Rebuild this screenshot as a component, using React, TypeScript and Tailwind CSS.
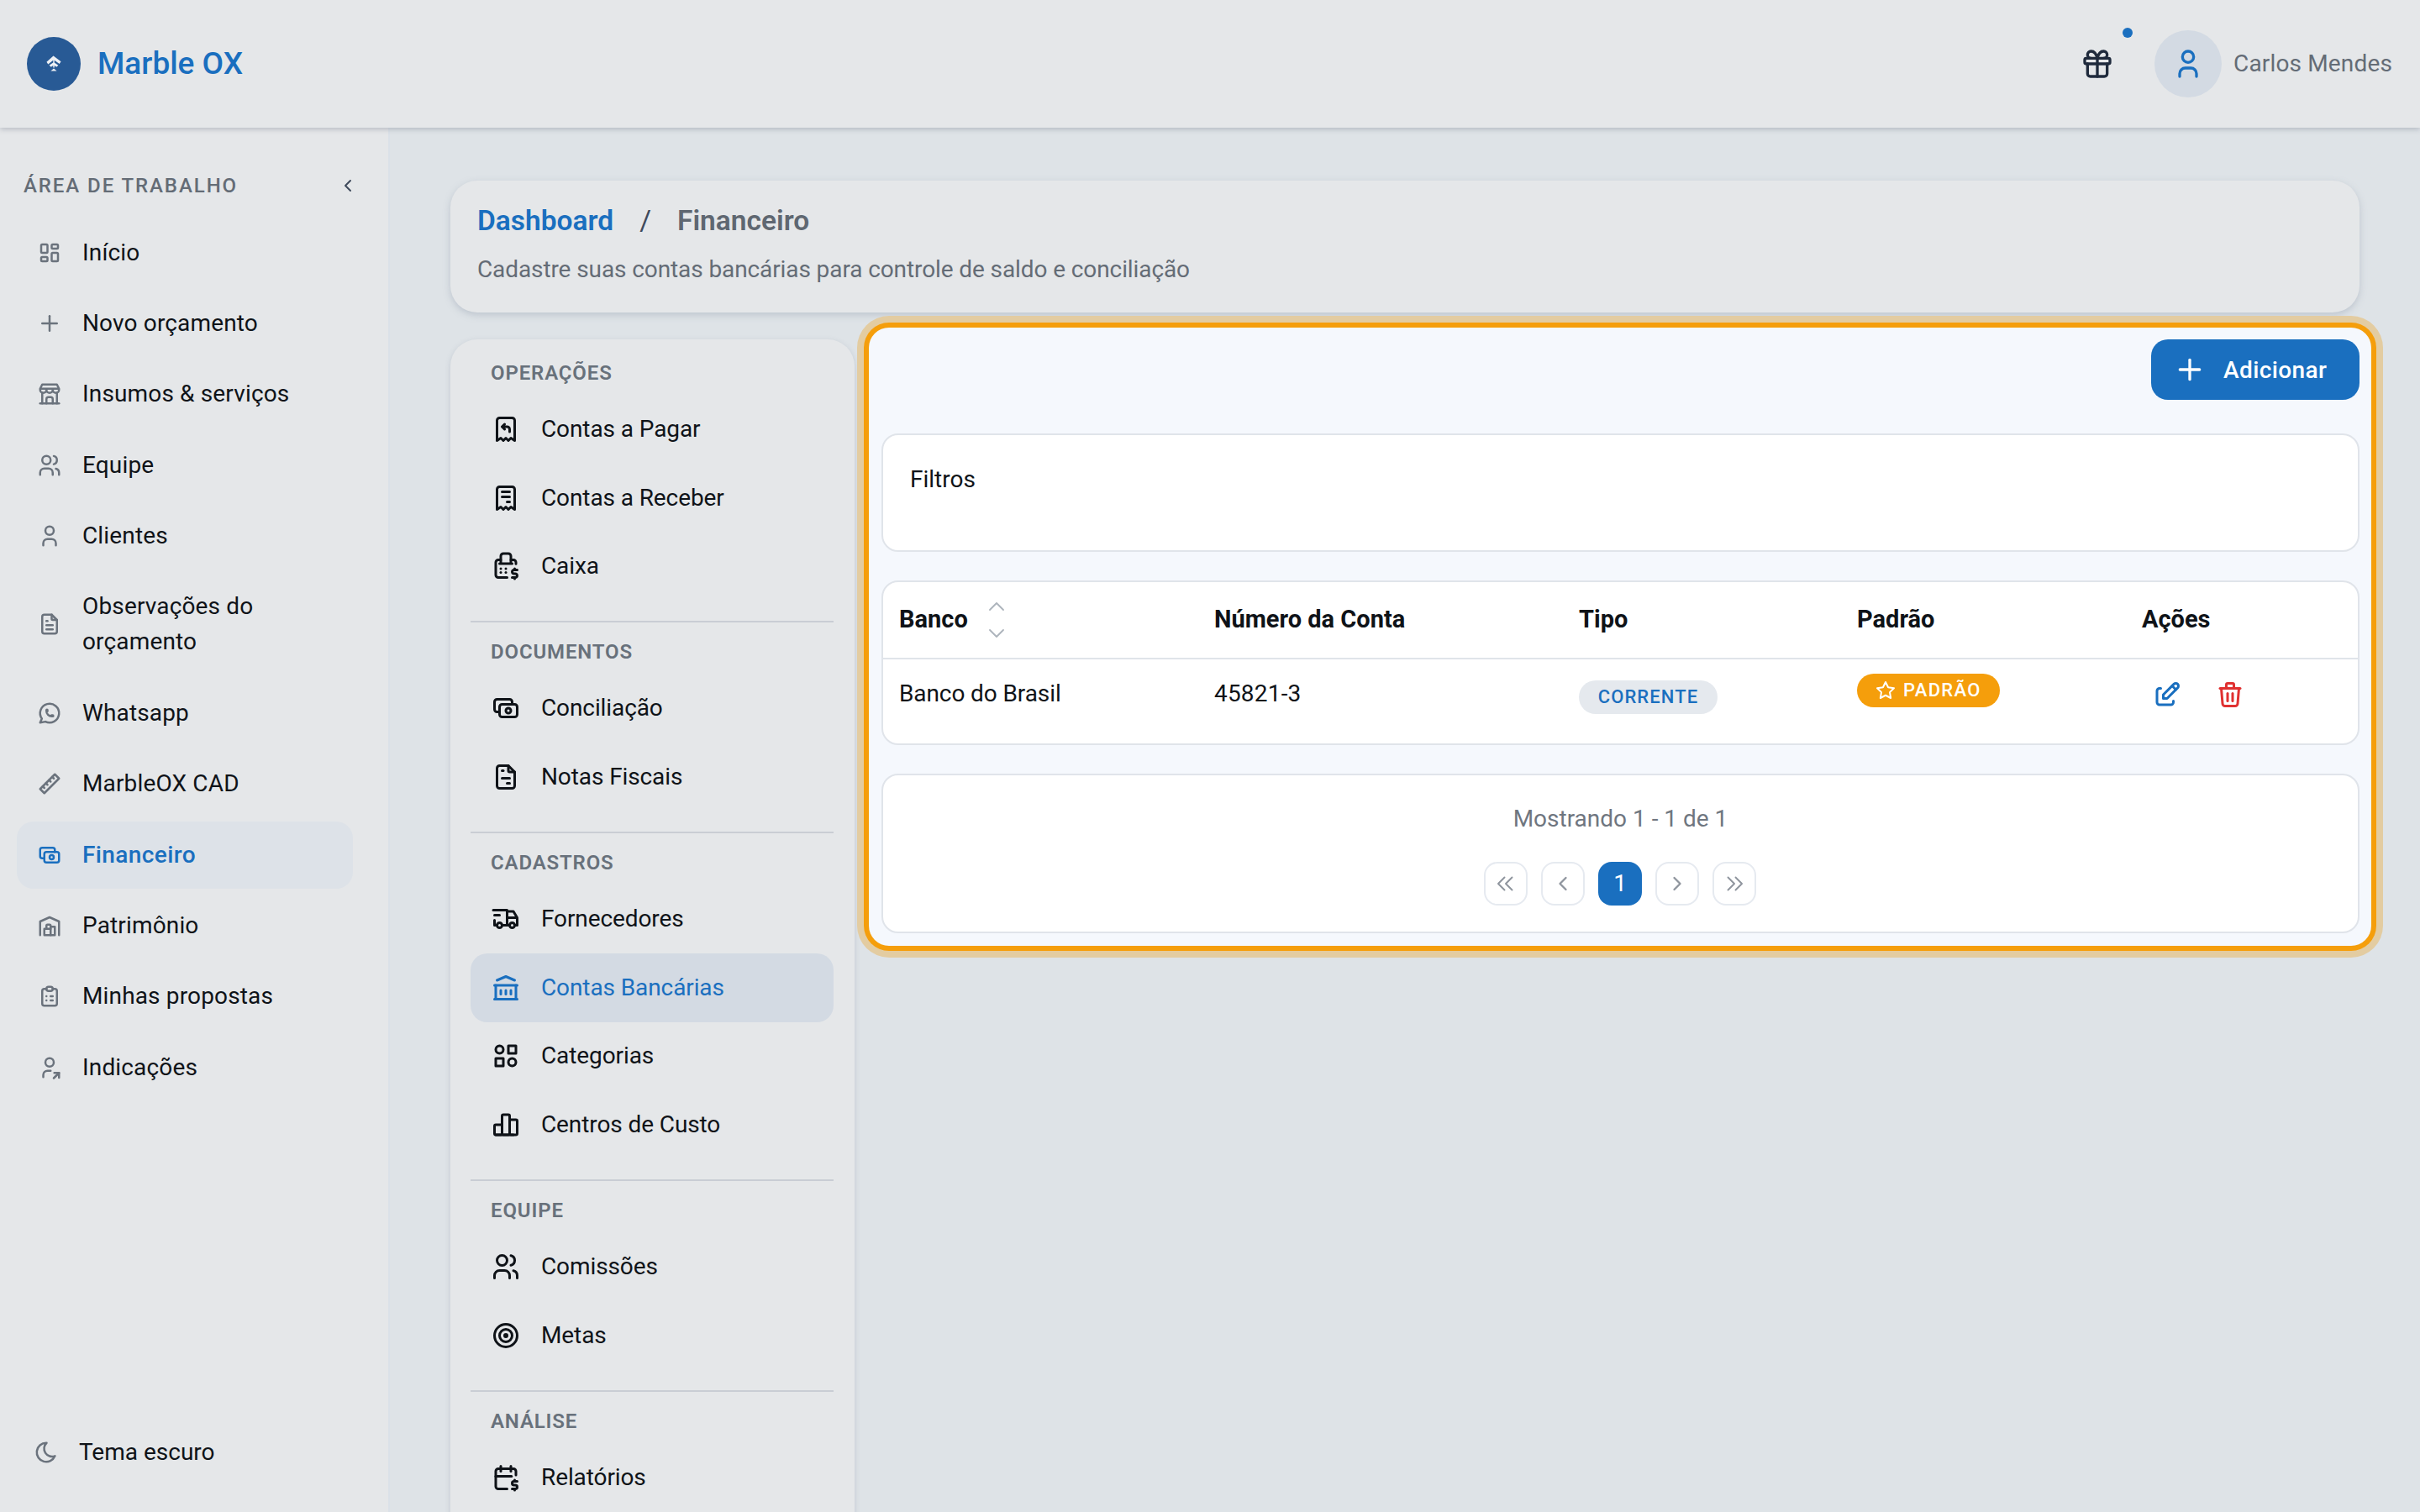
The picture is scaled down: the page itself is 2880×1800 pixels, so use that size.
import React from "react";
import {
  TbLayoutDashboard, TbPlus, TbBuildingStore, TbUsers, TbUser, TbFileText, TbBrandWhatsapp, TbRuler2, TbCash,
  TbBuildingWarehouse, TbClipboardList, TbUserShare, TbMoon, TbGift, TbEdit, TbTrash, TbStar, TbChevronUp, TbChevronDown,
  TbChevronLeft, TbChevronRight, TbChevronsLeft, TbChevronsRight, TbReceiptRefund, TbReceipt, TbCashRegister, TbFileInvoice,
  TbTruckDelivery, TbBuildingBank, TbCategory2, TbChartBar, TbTarget, TbCalendarDollar,
} from "react-icons/tb";

const BLUE = "text-[#1a6fbf]";

const mainNav: [React.ComponentType<any>, string][] = [
  [TbLayoutDashboard, "Início"],
  [TbPlus, "Novo orçamento"],
  [TbBuildingStore, "Insumos & serviços"],
  [TbUsers, "Equipe"],
  [TbUser, "Clientes"],
  [TbFileText, "Observações do orçamento"],
  [TbBrandWhatsapp, "Whatsapp"],
  [TbRuler2, "MarbleOX CAD"],
  [TbCash, "Financeiro"],
  [TbBuildingWarehouse, "Patrimônio"],
  [TbClipboardList, "Minhas propostas"],
  [TbUserShare, "Indicações"],
];

const groups: { label: string; items: [React.ComponentType<any>, string][] }[] = [
  { label: "OPERAÇÕES", items: [[TbReceiptRefund, "Contas a Pagar"], [TbReceipt, "Contas a Receber"], [TbCashRegister, "Caixa"]] },
  { label: "DOCUMENTOS", items: [[TbCash, "Conciliação"], [TbFileInvoice, "Notas Fiscais"]] },
  { label: "CADASTROS", items: [[TbTruckDelivery, "Fornecedores"], [TbBuildingBank, "Contas Bancárias"], [TbCategory2, "Categorias"], [TbChartBar, "Centros de Custo"]] },
  { label: "EQUIPE", items: [[TbUsers, "Comissões"], [TbTarget, "Metas"]] },
  { label: "ANÁLISE", items: [[TbCalendarDollar, "Relatórios"]] },
];

function PagerButton({ children, active }: { children: React.ReactNode; active?: boolean }) {
  return (
    <div
      className={
        active
          ? "w-[52px] h-[52px] rounded-[16px] bg-[#1a6fbf] text-white flex items-center justify-center text-[28px]"
          : "w-[52px] h-[52px] rounded-[16px] border-2 border-[#e6eaf0] bg-white text-[#8f959e] flex items-center justify-center"
      }
    >
      {children}
    </div>
  );
}

export default function App() {
  return (
    <div className="h-[1800px] w-[2880px] overflow-hidden flex flex-col bg-[#dee3e7] text-[#0f1318] font-['Roboto',sans-serif]">
      <header className="relative z-20 h-[152px] shrink-0 bg-[#e5e7e9] shadow-[0_2px_6px_rgba(100,110,125,0.35)] flex items-center pl-[32px] pr-[33px]">
        <div className="w-[64px] h-[64px] rounded-full bg-[#285a95] flex items-center justify-center">
          <svg width="18" height="20" viewBox="0 0 20 22" fill="#eef1f5">
            <path d="M9.5 0.5 L19.5 8 L17.5 11 L10.8 6.2 L10.8 9.2 L16 13 L13.6 15.2 L10.8 13.2 L10.8 16 L9.2 16 L9.2 13.2 L6.4 15.2 L4 13 L9.2 9.2 L9.2 6.2 L2.5 11.5 L0.5 8.5 Z" />
            <path d="M10 17 L14 20.5 L6 20.5 Z" />
          </svg>
        </div>
        <span className={`ml-[20px] text-[37px] font-medium ${BLUE}`}>Marble OX</span>
        <div className="ml-auto flex items-center">
          <div className="relative w-[40px] h-[40px] text-[#1f2a3c]">
            <TbGift size={40} />
            <span className="absolute left-[50px] top-[-23px] w-[12px] h-[12px] rounded-full bg-[#1a6fbf]" />
          </div>
          <div className="ml-[48px] w-[80px] h-[80px] rounded-full bg-[#d3dae3] flex items-center justify-center">
            <TbUser size={40} className={BLUE} />
          </div>
          <span className="ml-[14px] text-[28px] tracking-[0.15px] text-[#646c76]">Carlos Mendes</span>
        </div>
      </header>

      <div className="flex flex-1 min-h-0">
        <aside className="w-[464px] shrink-0 bg-[#e5e7e9] border-r-2 border-[#dbe1e8] flex flex-col pl-[20px] pr-[42px]">
          <div className="h-[108.5px] shrink-0 flex items-center justify-between pl-[8px]">
            <span className="text-[24px] font-medium tracking-[0.08em] text-[#646c76] mt-[30px]">ÁREA DE TRABALHO</span>
            <TbChevronLeft size={24} className="text-[#3f4a5c] mt-[30px] mr-[-6px]" />
          </div>
          <nav className="flex flex-col gap-[4.4px]">
            {mainNav.map(([Icon, label]) => {
              const active = label === "Financeiro";
              return (
                <div
                  key={label}
                  className={`flex items-center pl-[24px] pr-[20px] py-[19px] rounded-[20px] text-[28px] leading-[42px] ${
                    active ? `bg-[#dde2e8] font-medium tracking-[0.4px] ${BLUE}` : "tracking-[0.15px]"
                  }`}
                >
                  <Icon size={30} className={`shrink-0 ${active ? BLUE : "text-[#6b737d]"}`} />
                  <span className="ml-[24px]">{label}</span>
                </div>
              );
            })}
          </nav>
          <div className="mt-auto mb-[50px] flex items-center pl-[20px] text-[28px] leading-[42px]">
            <TbMoon size={30} className="text-[#6b737d] shrink-0" />
            <span className="ml-[24px]">Tema escuro</span>
          </div>
        </aside>

        <main className="flex-1 min-w-0 pl-[72px] pr-[72px] pt-[63px]">
          <section className="h-[157px] rounded-[32px] bg-[#e5e7e9] shadow-[0_3px_8px_rgba(130,140,160,0.35)] pl-[32px] pt-[26px]">
            <div className="flex items-center h-[44px] text-[33.5px] font-semibold">
              <span className={BLUE}>Dashboard</span>
              <span className="ml-[31px] font-normal text-[#3f4a5c]">/</span>
              <span className="ml-[31px] text-[#5f6771]">Financeiro</span>
            </div>
            <p className="mt-[15px] text-[28px] leading-[42px] tracking-[-0.1px] text-[#646c76]">
              Cadastre suas contas bancárias para controle de saldo e conciliação
            </p>
          </section>

          <div className="flex items-start mt-[32px]">
            <div className="w-[481px] shrink-0 h-[1500px] rounded-[32px] bg-[#e5e7e9] shadow-[0_2px_6px_rgba(130,140,160,0.3)] pl-[24px] pr-[25px] pt-[23px]">
              {groups.map((g, i) => (
                <div key={g.label}>
                  {i > 0 && <div className="h-[2px] bg-[#c9cdd4] mt-[24px] mb-[18px]" />}
                  <div className="h-[34px] flex items-center pl-[24px] text-[24px] font-semibold tracking-[0.85px] text-[#68717b]">{g.label}</div>
                  <div className="mt-[9px]">
                    {g.items.map(([Icon, label]) => {
                      const active = label === "Contas Bancárias";
                      return (
                        <div
                          key={label}
                          className={`h-[81.8px] flex items-center pl-[24px] rounded-[20px] text-[28px] tracking-[-0.1px] ${active ? `bg-[#d3dae3] ${BLUE}` : ""}`}
                        >
                          <Icon size={36} className="shrink-0" />
                          <span className="ml-[24px]">{label}</span>
                        </div>
                      );
                    })}
                  </div>
                </div>
              ))}
            </div>

            <section className="relative ml-[17px] -mr-[14px] -mt-[14px] flex-1 min-w-0 rounded-[24px] bg-[#f5f8fd] shadow-[0_0_0_6px_#f59e0b,0_0_0_14px_#e3cca1] pl-[15px] pr-[14px] pt-[14px] pb-[15px]">
              <div className="flex justify-end">
                <div className="w-[248px] h-[72px] rounded-[20px] bg-[#1a6fbf] text-white flex items-center pl-[26px] text-[28px] font-medium tracking-[0.4px]">
                  <TbPlus size={40} />
                  <span className="ml-[20px] mt-[2px]">Adicionar</span>
                </div>
              </div>

              <div className="mt-[40px] h-[141px] rounded-[20px] border-2 border-[#e0e4ea] bg-white pl-[32px] pt-[32px] text-[28px] leading-[42px]">
                Filtros
              </div>

              <div className="mt-[34px] h-[196px] rounded-[20px] border-2 border-[#e0e4ea] bg-white">
                <div className="grid grid-cols-[375px_434px_331px_339px_1fr] pl-[19px] h-[92px] items-center border-b-2 border-[#e0e4ea] text-[29px] font-bold">
                  <div className="relative">
                    Banco
                    <TbChevronUp size={32} strokeWidth={1.4} className="absolute left-[100px] top-[-10px] text-[#adb4bc]" />
                    <TbChevronDown size={32} strokeWidth={1.4} className="absolute left-[100px] top-[22px] text-[#adb4bc]" />
                  </div>
                  <div>Número da Conta</div>
                  <div>Tipo</div>
                  <div>Padrão</div>
                  <div>Ações</div>
                </div>
                <div className="grid grid-cols-[375px_434px_331px_339px_1fr] pl-[19px] items-start pt-[20px] text-[28px] leading-[42px]">
                  <div className="tracking-[-0.1px]">Banco do Brasil</div>
                  <div className="tracking-[0.2px]">45821-3</div>
                  <div className="pt-[2px]">
                    <span className="inline-flex items-center justify-center w-[165px] h-[40px] rounded-full bg-[#e5e9ee] text-[22px] leading-none font-medium tracking-[0.05em] text-[#1a6fbf]">CORRENTE</span>
                  </div>
                  <div className="-mt-[3px]">
                    <span className="inline-flex items-center pl-[22px] gap-[9px] w-[170px] h-[40px] rounded-full bg-[#f59e0b] text-[22px] leading-none font-medium tracking-[0.06em] text-white">
                      <TbStar size={24} />
                      PADRÃO
                    </span>
                  </div>
                  <div className="flex items-center pl-[12px] gap-[39px] pt-[4px]">
                    <TbEdit size={36} className={BLUE} />
                    <TbTrash size={36} className="text-[#e03131]" />
                  </div>
                </div>
              </div>

              <div className="mt-[34px] h-[190px] rounded-[20px] border-2 border-[#e0e4ea] bg-white flex flex-col items-center pt-[31px]">
                <div className="text-[28px] leading-[42px] text-[#6f767f]">Mostrando 1 - 1 de 1</div>
                <div className="mt-[30px] mr-[1px] flex gap-[16px]">
                  <PagerButton><TbChevronsLeft size={36} strokeWidth={1.3} /></PagerButton>
                  <PagerButton><TbChevronLeft size={28} /></PagerButton>
                  <PagerButton active>1</PagerButton>
                  <PagerButton><TbChevronRight size={28} /></PagerButton>
                  <PagerButton><TbChevronsRight size={36} strokeWidth={1.3} /></PagerButton>
                </div>
              </div>
            </section>
          </div>
        </main>
      </div>
    </div>
  );
}
